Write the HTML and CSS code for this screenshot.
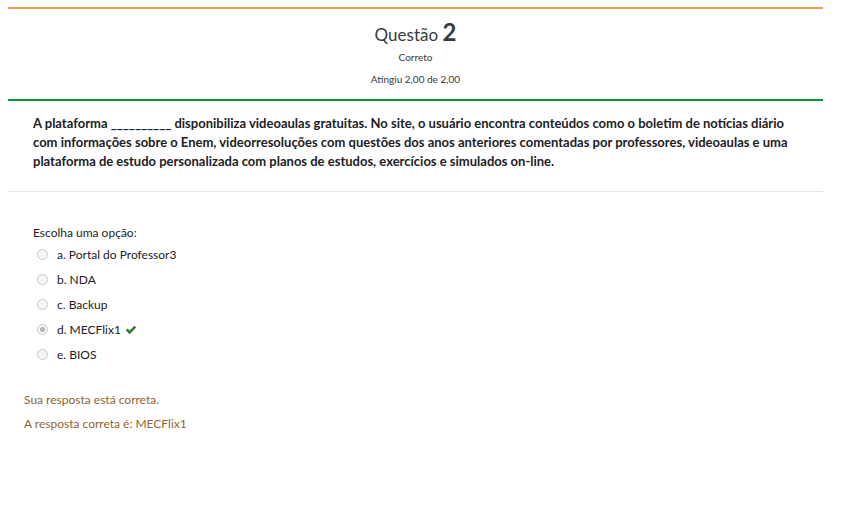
FILE: index.html
```html
<!DOCTYPE html>
<html lang="pt-BR">
<head>
<meta charset="utf-8">
<link rel="stylesheet" href="styles.css">
<title>Questão 2</title>
</head>
<body>
<div class="que">
  <div class="info">
    <h3 class="qno">Questão <span class="num">2</span></h3>
    <div class="state">Correto</div>
    <div class="grade">Atingiu 2,00 de 2,00</div>
  </div>
  <div class="qtext">A plataforma __________ disponibiliza videoaulas gratuitas. No site, o usuário encontra conteúdos como o boletim de notícias diário com informações sobre o Enem, videorresoluções com questões dos anos anteriores comentadas por professores, videoaulas e uma plataforma de estudo personalizada com planos de estudos, exercícios e simulados on-line.</div>
  <div class="ablock">
    <div class="prompt">Escolha uma opção:</div>
    <div class="answer">
      <div class="opt"><span class="radio"></span><span>a. Portal do Professor3</span></div>
      <div class="opt"><span class="radio"></span><span>b. NDA</span></div>
      <div class="opt"><span class="radio"></span><span>c. Backup</span></div>
      <div class="opt"><span class="radio checked"></span><span>d. MECFlix1</span>
        <svg class="check" viewBox="0 0 16 16" width="12" height="12"><path d="M1 8.4 L3.5 5.9 L6.2 8.6 L12.5 2.3 L15 4.8 L6.2 13.6 Z" fill="#357a32"/></svg>
      </div>
      <div class="opt"><span class="radio"></span><span>e. BIOS</span></div>
    </div>
  </div>
  <div class="feedback">
    <div class="fb">Sua resposta está correta.</div>
    <div class="fb">A resposta correta é: MECFlix1</div>
  </div>
</div>
</body>
</html>
```

FILE: styles.css
```css
html, body {
  margin: 0;
  padding: 0;
  background: #fff;
}
body {
  font-family: Lato, "Open Sans", sans-serif;
  color: #1d2125;
}
.que {
  width: 815px;
  margin: 7px 0 0 8px;
}
.info {
  border-top: 2px solid #f7984e;
  border-bottom: 2px solid #0a9136;
  height: 90px;
  box-sizing: content-box;
  text-align: center;
  color: #373a3c;
}
.qno {
  margin: 11px 0 0 0;
  font-weight: 400;
  font-size: 17px;
  line-height: 24px;
  color: #373a3c;
}
.num {
  font-weight: 700;
  font-size: 24px;
}
.state {
  font-size: 10px;
  margin-top: 3px;
  line-height: 14px;
}
.grade {
  font-size: 10px;
  margin-top: 8px;
  line-height: 14px;
}
.qtext {
  font-weight: 700;
  font-size: 13px;
  line-height: 19px;
  padding: 13px 15px 20px 25px;
  border-bottom: 1px solid #e3e3e3;
  color: #1d2125;
}
.ablock {
  padding: 33px 25px 0 25px;
  font-size: 12px;
}
.prompt {
  line-height: 16px;
  margin-bottom: 1px;
}
.opt {
  display: flex;
  align-items: center;
  height: 25px;
  padding-left: 4px;
}
.radio {
  width: 9px;
  height: 9px;
  border: 1px solid #c9c9c9;
  border-radius: 50%;
  background: #f6f6f6;
  margin-right: 9px;
  position: relative;
  flex: none;
}
.radio.checked::after {
  content: "";
  position: absolute;
  left: 2px;
  top: 2px;
  width: 5px;
  height: 5px;
  border-radius: 50%;
  background: #b5b5b5;
}
.check {
  margin-left: 4px;
}
.feedback {
  padding: 25px 16px 0 16px;
  font-size: 12px;
  color: #8e662e;
}
.fb {
  line-height: 16px;
  margin-bottom: 8px;
}
```
